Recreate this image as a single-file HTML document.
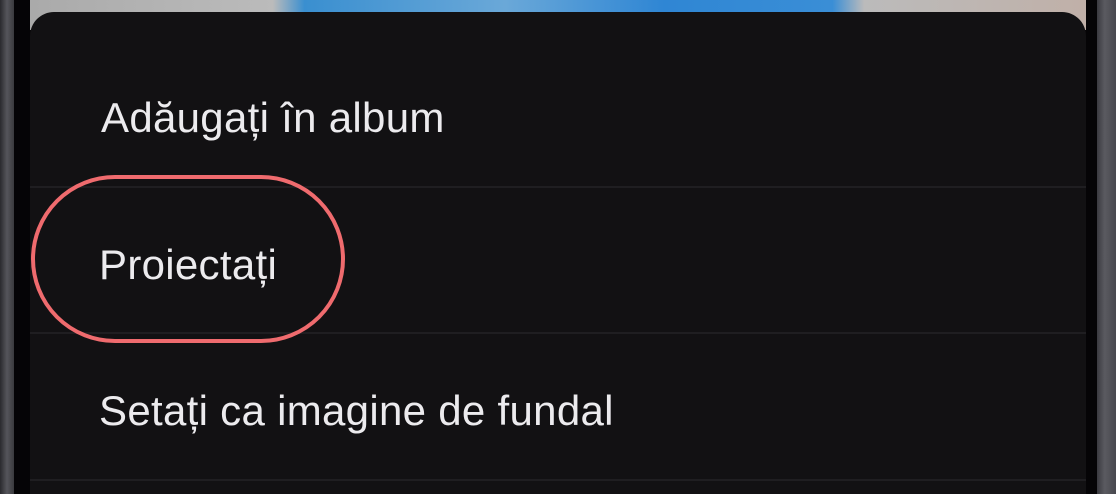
<!DOCTYPE html>
<html><head><style>
html,body{margin:0;width:1116px;height:494px;overflow:hidden}
body{background:#050406;position:relative;font-family:"Liberation Sans",sans-serif}
.bl{position:absolute;left:0;top:0;width:14px;height:494px;background:linear-gradient(90deg,#2a2a2e,#55555b 50%,#3a3a3e)}
.br{position:absolute;right:0;top:0;width:19px;height:494px;background:linear-gradient(90deg,#3a3a40,#5a5a60 40%,#48484e)}
.img{position:absolute;left:30px;top:0;width:1056px;height:30px;background:linear-gradient(90deg,#aaa 0,#bbb 23%,#3a8fd0 26%,#6aa8d8 45%,#2f86d4 60%,#3a8ed6 76%,#bbb 79%,#c0b0a8 100%)}
.sheet{position:absolute;left:30px;top:12px;width:1056px;height:482px;background:#121113;border-radius:24px 24px 0 0}
.t{position:absolute;left:101px;color:#ecebee;font-size:42px;letter-spacing:0.3px;white-space:nowrap}
.d{position:absolute;left:30px;width:1056px;height:2px;background:#1f1e21}
.oval{position:absolute;left:31px;top:175px;width:314px;height:168px;border:4px solid #ef6b6e;border-radius:90px;box-sizing:border-box}
</style></head><body>
<div class="bl"></div><div class="br"></div>
<div class="img"></div>
<div class="sheet"></div>
<div class="t" style="top:94px">Adăugați în album</div>
<div class="d" style="top:186px"></div>
<div class="t" style="top:241px;left:99px">Proiectați</div>
<div class="d" style="top:332px"></div>
<div class="t" style="top:387px;left:99px">Setați ca imagine de fundal</div>
<div class="d" style="top:479px"></div>
<div class="oval"></div>
</body></html>
